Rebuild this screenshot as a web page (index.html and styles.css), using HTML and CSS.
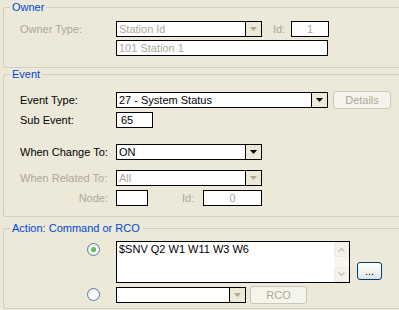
FILE: index.html
```html
<!DOCTYPE html>
<html>
<head>
<meta charset="utf-8">
<link rel="stylesheet" href="styles.css">
</head>
<body>
<div class="dlg">
  <fieldset class="grp owner">
    <legend>Owner</legend>
    <div class="inner">
      <div class="row">
        <span class="lbl dis">Owner Type:</span>
        <div class="combo dis w146"><span class="val">Station Id</span><span class="arr"><svg width="7" height="4" viewBox="0 0 7 4"><polygon points="0,0 7,0 3.5,4" /></svg></span></div>
        <span class="idl dis">Id:</span>
        <div class="box dis w38 ctr">1</div>
      </div>
      <div class="row">
        <span class="lbl"></span>
        <div class="box dis w212">101 Station 1</div>
      </div>
    </div>
  </fieldset>

  <fieldset class="grp event">
    <legend>Event</legend>
    <div class="inner">
      <div class="row">
        <span class="lbl">Event Type:</span>
        <div class="combo w212"><span class="val">27 - System Status</span><span class="arr"><svg width="7" height="4" viewBox="0 0 7 4"><polygon points="0,0 7,0 3.5,4" /></svg></span></div>
        <button class="xpbtn disbtn details">Details</button>
      </div>
      <div class="row r-sub">
        <span class="lbl">Sub Event:</span>
        <div class="box w37 pad3">65</div>
      </div>
      <div class="row r-change">
        <span class="lbl">When Change To:</span>
        <div class="combo w146"><span class="val">ON</span><span class="arr"><svg width="7" height="4" viewBox="0 0 7 4"><polygon points="0,0 7,0 3.5,4" /></svg></span></div>
      </div>
      <div class="row r-rel">
        <span class="lbl dis">When Related To:</span>
        <div class="combo dis w146"><span class="val">All</span><span class="arr"><svg width="7" height="4" viewBox="0 0 7 4"><polygon points="0,0 7,0 3.5,4" /></svg></span></div>
      </div>
      <div class="row r-node">
        <span class="lbl dis right">Node:</span>
        <div class="box w32"></div>
        <span class="idl2 dis">Id:</span>
        <div class="box dis w59 ctr">0</div>
      </div>
    </div>
  </fieldset>

  <fieldset class="grp action">
    <legend>Action: Command or RCO</legend>
    <div class="inner">
      <div class="row r-cmd">
        <span class="lbl radcell"><span class="radio on"><span class="dot"></span></span></span>
        <div class="tarea">
          <span class="ttext">$SNV Q2 W1 W11 W3 W6</span>
          <div class="sbar">
            <span class="sbtn"><svg width="7" height="5" viewBox="0 0 7 5"><polyline points="0.5,4.5 3.5,1.5 6.5,4.5" /></svg></span>
            <span class="strack"></span>
            <span class="sbtn"><svg width="7" height="5" viewBox="0 0 7 5"><polyline points="0.5,0.5 3.5,3.5 6.5,0.5" /></svg></span>
          </div>
        </div>
        <button class="xpbtn dots">...</button>
      </div>
      <div class="row r-rco">
        <span class="lbl radcell"><span class="radio"></span></span>
        <div class="combo dis w130"><span class="val"></span><span class="arr"><svg width="7" height="4" viewBox="0 0 7 4"><polygon points="0,0 7,0 3.5,4" /></svg></span></div>
        <button class="xpbtn disbtn rco">RCO</button>
      </div>
    </div>
  </fieldset>
</div>
</body>
</html>
```

FILE: styles.css
```css
html, body {
  margin: 0;
  padding: 0;
}
body {
  background: #ECE9D8;
  font-family: "Liberation Sans", Arial, sans-serif;
  font-size: 11px;
  color: #000;
  width: 399px;
  height: 310px;
  overflow: hidden;
}
.dlg {
  padding-left: 3px;
  width: 396px;
}
.grp {
  margin: 0;
  padding: 0;
  border: 1px solid #D0D0BF;
  border-right: none;
  border-radius: 3px 0 0 3px;
  min-width: 0;
}
.grp legend {
  margin-left: 6px;
  padding: 0 2px;
  line-height: 14px;
  color: #0046D5;
}
.inner {
  padding-left: 16px;
  display: flex;
  flex-direction: column;
}
.owner .inner { padding-top: 7px; padding-bottom: 11px; gap: 3px; }
.event { margin-top: -1px; }
.event .inner { padding-top: 10px; padding-bottom: 10px; }
.action { margin-top: 4px; }
.action .inner { padding-top: 6px; padding-bottom: 4px; }

.r-sub { margin-top: 3px; }
.r-change { margin-top: 16px; }
.r-rel { margin-top: 10px; }
.r-node { margin-top: 4px; }

.row {
  display: flex;
  align-items: center;
}
.lbl {
  width: 96px;
  flex: none;
  white-space: nowrap;
}
.lbl.right {
  text-align: right;
  padding-right: 8px;
  box-sizing: border-box;
}
.dis { color: #ACA899; }

.box, .combo {
  box-sizing: border-box;
  height: 16px;
  border: 1px solid #000;
  background: #fff;
  line-height: 14px;
  white-space: nowrap;
  flex: none;
}
.box { padding-left: 2px; }
.box.ctr { text-align: center; padding-left: 0; }
.box.pad3 { padding-left: 4px; }
.combo {
  display: flex;
}
.combo .val {
  flex: 1;
  padding-left: 2px;
  overflow: hidden;
}
.combo .arr {
  width: 15px;
  border-left: 1px solid #000;
  background: #ECE9D8;
  display: flex;
  align-items: center;
  justify-content: center;
}
.combo .arr polygon { fill: #000; }
.combo.dis .arr polygon { fill: #ACA899; }

.w32 { width: 32px; }
.w37 { width: 37px; }
.w38 { width: 38px; }
.w59 { width: 59px; }
.w130 { width: 130px; }
.w146 { width: 146px; }
.w212 { width: 212px; }

.idl {
  width: 29px;
  padding-left: 11px;
  box-sizing: border-box;
  flex: none;
}
.idl2 {
  width: 55px;
  padding-left: 34px;
  box-sizing: border-box;
  flex: none;
}

.xpbtn {
  font: inherit;
  font-size: 11px;
  box-sizing: border-box;
  height: 18px;
  padding: 0;
  border-radius: 3px;
  line-height: 16px;
  text-align: center;
  flex: none;
}
.disbtn {
  border: 1px solid #C9C7BA;
  background: #F5F4EA;
  color: #ACA899;
}
.details { width: 58px; margin-left: 5px; }
.rco { width: 57px; margin-left: 4px; }
.dots {
  width: 25px;
  margin-left: 7px;
  border: 1px solid #003C74;
  background: linear-gradient(#FFFFFF, #F3F3EF 50%, #E6E8EE 85%, #D6DDEA);
  color: #000;
  align-self: flex-end;
  margin-bottom: 3px;
  line-height: 14px;
}

.r-cmd { align-items: flex-start; }
.r-rco { margin-top: 3px; align-items: flex-start; }
.r-rco .combo { margin-top: 1px; }
.radcell {
  display: flex;
  justify-content: flex-end;
  padding-right: 16px;
  padding-top: 2px;
  box-sizing: border-box;
}
.radio {
  width: 13px;
  height: 13px;
  box-sizing: border-box;
  border-radius: 50%;
  border: 1px solid #5A7EA8;
  background: radial-gradient(circle at 60% 60%, #FFFFFF 30%, #E4E3DC 100%);
  display: flex;
  align-items: center;
  justify-content: center;
}
.radio .dot {
  width: 5px;
  height: 5px;
  border-radius: 50%;
  background: radial-gradient(circle at 40% 40%, #7DD36B, #21A121);
}

.tarea {
  width: 234px;
  height: 42px;
  box-sizing: border-box;
  border: 1px solid #000;
  background: #fff;
  display: flex;
  flex: none;
}
.ttext {
  flex: 1;
  padding: 1px 0 0 2px;
  line-height: 13px;
  white-space: nowrap;
}
.sbar {
  width: 15px;
  display: flex;
  flex-direction: column;
  background: #F7F6F1;
}
.sbtn {
  height: 15px;
  box-sizing: border-box;
  border: 1px solid #EEEDE5;
  background: #F3F2EC;
  border-radius: 2px;
  display: flex;
  align-items: center;
  justify-content: center;
}
.sbtn polyline {
  fill: none;
  stroke: #C9C7BA;
  stroke-width: 1.5;
}
.strack { flex: 1; }
```
